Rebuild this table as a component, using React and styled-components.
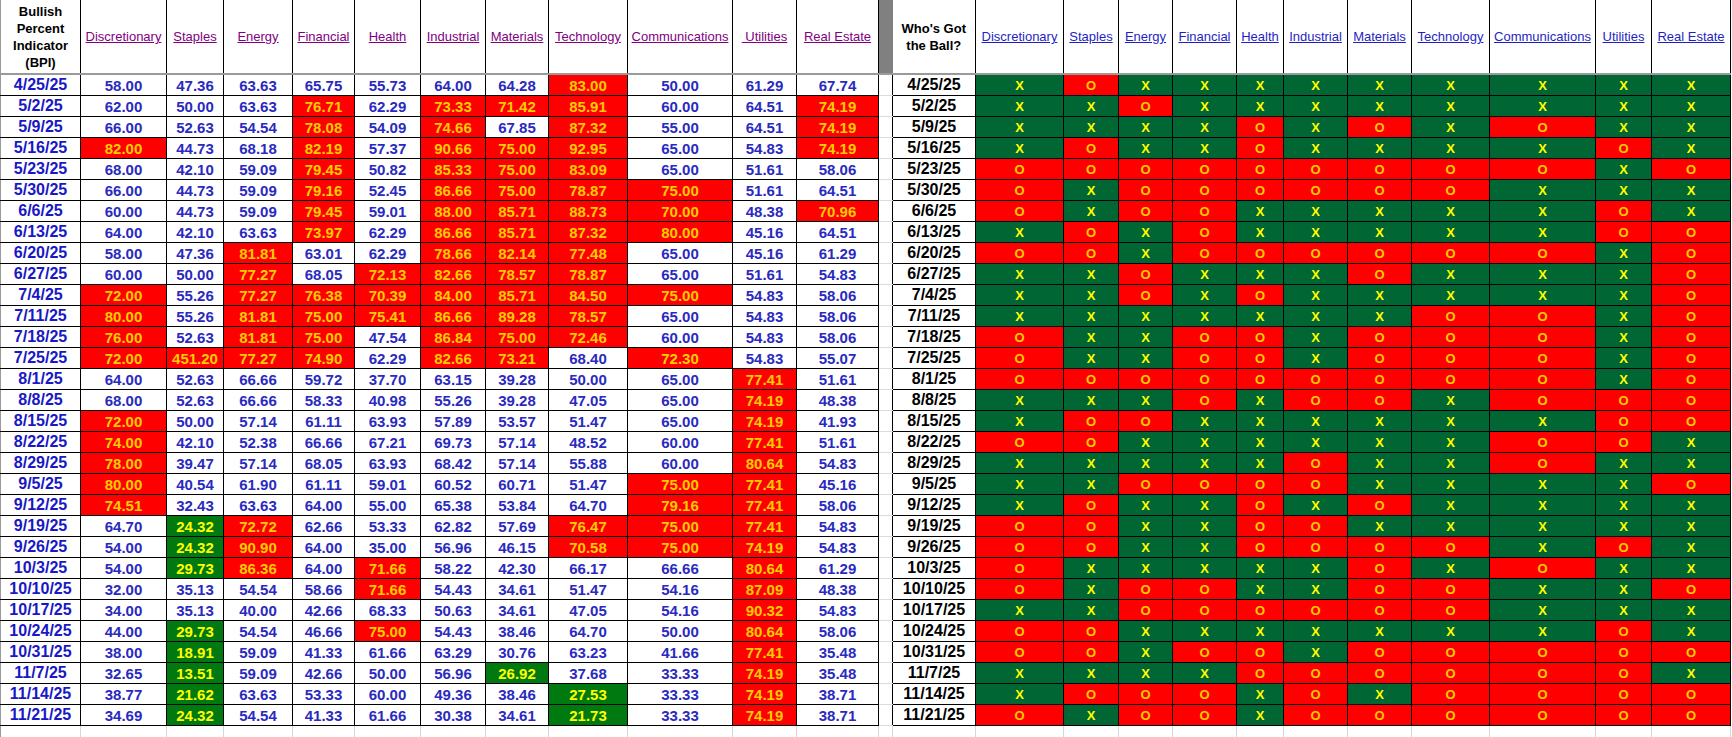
import styled, { createGlobalStyle } from 'styled-components'

const GlobalStyle = createGlobalStyle`
  html, body {
    margin: 0;
    padding: 0;
    background: #fff;
  }
  body {
    font-family: "Liberation Sans", Arial, sans-serif;
  }
`

const SECTORS = ['Discretionary', 'Staples', 'Energy', 'Financial', 'Health', 'Industrial', 'Materials', 'Technology', 'Communications', 'Utilities', 'Real Estate']

const LEFT_WIDTHS = [80, 86, 57, 69, 62, 66, 65, 63, 79, 105, 64, 82]
const GAP_WIDTH = 14
const RIGHT_WIDTHS = [83, 88, 55, 54, 64, 47, 64, 64, 78, 106, 56, 79]

// date, BPI values (r = red, g = green), who's got the ball
const ROWS = [
  ['4/25/25', '58.00 47.36 63.63 65.75 55.73 64.00 64.28 83.00r 50.00 61.29 67.74', 'XOXXXXXXXXX'],
  ['5/2/25', '62.00 50.00 63.63 76.71r 62.29 73.33r 71.42r 85.91r 60.00 64.51 74.19r', 'XXOXXXXXXXX'],
  ['5/9/25', '66.00 52.63 54.54 78.08r 54.09 74.66r 67.85 87.32r 55.00 64.51 74.19r', 'XXXXOXOXOXX'],
  ['5/16/25', '82.00r 44.73 68.18 82.19r 57.37 90.66r 75.00r 92.95r 65.00 54.83 74.19r', 'XOXXOXXXXOX'],
  ['5/23/25', '68.00 42.10 59.09 79.45r 50.82 85.33r 75.00r 83.09r 65.00 51.61 58.06', 'OOOOOOOOOXO'],
  ['5/30/25', '66.00 44.73 59.09 79.16r 52.45 86.66r 75.00r 78.87r 75.00r 51.61 64.51', 'OXOOOOOOXXX'],
  ['6/6/25', '60.00 44.73 59.09 79.45r 59.01 88.00r 85.71r 88.73r 70.00r 48.38 70.96r', 'OXOOXXXXXOX'],
  ['6/13/25', '64.00 42.10 63.63 73.97r 62.29 86.66r 85.71r 87.32r 80.00r 45.16 64.51', 'XOXOXXXXXOO'],
  ['6/20/25', '58.00 47.36 81.81r 63.01 62.29 78.66r 82.14r 77.48r 65.00 45.16 61.29', 'OOXOOOOOOXO'],
  ['6/27/25', '60.00 50.00 77.27r 68.05 72.13r 82.66r 78.57r 78.87r 65.00 51.61 54.83', 'XXOXXXOXXXO'],
  ['7/4/25', '72.00r 55.26 77.27r 76.38r 70.39r 84.00r 85.71r 84.50r 75.00r 54.83 58.06', 'XXOXOXXXXXO'],
  ['7/11/25', '80.00r 55.26 81.81r 75.00r 75.41r 86.66r 89.28r 78.57r 65.00 54.83 58.06', 'XXXXXXXOOXO'],
  ['7/18/25', '76.00r 52.63 81.81r 75.00r 47.54 86.84r 75.00r 72.46r 60.00 54.83 58.06', 'OXXOOXOOOXO'],
  ['7/25/25', '72.00r 451.20r 77.27r 74.90r 62.29 82.66r 73.21r 68.40 72.30r 54.83 55.07', 'OXXOOXOOOXO'],
  ['8/1/25', '64.00 52.63 66.66 59.72 37.70 63.15 39.28 50.00 65.00 77.41r 51.61', 'OOOOOOOOOXO'],
  ['8/8/25', '68.00 52.63 66.66 58.33 40.98 55.26 39.28 47.05 65.00 74.19r 48.38', 'XXXOXOOXOOO'],
  ['8/15/25', '72.00r 50.00 57.14 61.11 63.93 57.89 53.57 51.47 65.00 74.19r 41.93', 'XOOXXXXXXOO'],
  ['8/22/25', '74.00r 42.10 52.38 66.66 67.21 69.73 57.14 48.52 60.00 77.41r 51.61', 'OOXXXXXXOOX'],
  ['8/29/25', '78.00r 39.47 57.14 68.05 63.93 68.42 57.14 55.88 60.00 80.64r 54.83', 'XXXXXOXXOXX'],
  ['9/5/25', '80.00r 40.54 61.90 61.11 59.01 60.52 60.71 51.47 75.00r 77.41r 45.16', 'XXOOOOXXXXO'],
  ['9/12/25', '74.51r 32.43 63.63 64.00 55.00 65.38 53.84 64.70 79.16r 77.41r 58.06', 'XOXXOXOXXXX'],
  ['9/19/25', '64.70 24.32g 72.72r 62.66 53.33 62.82 57.69 76.47r 75.00r 77.41r 54.83', 'OOXXOOXXXXX'],
  ['9/26/25', '54.00 24.32g 90.90r 64.00 35.00 56.96 46.15 70.58r 75.00r 74.19r 54.83', 'OOXXOOOOXOX'],
  ['10/3/25', '54.00 29.73g 86.36r 64.00 71.66r 58.22 42.30 66.17 66.66 80.64r 61.29', 'OXXXXXOXOXX'],
  ['10/10/25', '32.00 35.13 54.54 58.66 71.66r 54.43 34.61 51.47 54.16 87.09r 48.38', 'OXOOXXOOXXO'],
  ['10/17/25', '34.00 35.13 40.00 42.66 68.33 50.63 34.61 47.05 54.16 90.32r 54.83', 'XXOOOOOOXXX'],
  ['10/24/25', '44.00 29.73g 54.54 46.66 75.00r 54.43 38.46 64.70 50.00 80.64r 58.06', 'OOXXXXXXXOX'],
  ['10/31/25', '38.00 18.91g 59.09 41.33 61.66 63.29 30.76 63.23 41.66 77.41r 35.48', 'OOXOOXOOOOO'],
  ['11/7/25', '32.65 13.51g 59.09 42.66 50.00 56.96 26.92g 37.68 33.33 74.19r 35.48', 'XXXXOOOOOOX'],
  ['11/14/25', '38.77 21.62g 63.63 53.33 60.00 49.36 38.46 27.53g 33.33 74.19r 38.71', 'XOOOXOXOOOO'],
  ['11/21/25', '34.69 24.32g 54.54 41.33 61.66 30.38 34.61 21.73g 33.33 74.19r 38.71', 'OXOOXOOOOOO'],
]

const parseValues = (line) =>
  line.split(' ').map((v) => {
    const last = v.slice(-1)
    if (last === 'r' || last === 'g') return { value: v.slice(0, -1), tone: last }
    return { value: v, tone: '' }
  })

const Sheet = styled.table`
  border-collapse: collapse;
  table-layout: fixed;
  width: 1730px;
  font-family: "Liberation Sans", Arial, sans-serif;
`

const HeadCell = styled.th`
  height: 73px;
  padding: 0 2px;
  border-right: 1px solid #000;
  border-bottom: 2px solid #9a9a9a;
  border-left: ${(p) => (p.$first ? '1px solid #9a9a9a' : 'none')};
  background: #fff;
  text-align: center;
  vertical-align: middle;
  font-size: 13px;
  font-weight: ${(p) => (p.$title ? 700 : 400)};
  line-height: 17px;
  color: #000;
  white-space: ${(p) => (p.$title ? 'normal' : 'nowrap')};
  overflow: hidden;
`

const GapHead = styled.th`
  padding: 0;
  background: #808080;
  border-bottom: 2px solid #9a9a9a;
`

const SectorLink = styled.a`
  color: ${(p) => (p.$visited ? '#800080' : '#1f1fc4')};
  text-decoration: underline;
  white-space: pre;
`

const DateCell = styled.td`
  height: 20px;
  padding: 0;
  border: 1px solid #000;
  border-left: ${(p) => (p.$first ? '1px solid #9a9a9a' : '1px solid #000')};
  text-align: center;
  vertical-align: middle;
  font-size: 16px;
  font-weight: 700;
  color: ${(p) => (p.$black ? '#000' : '#1818c4')};
  white-space: nowrap;
`

const toneBg = { r: '#ff0000', g: '#007a10', '': '#fff' }
const toneFg = { r: '#ffcc00', g: '#ffff00', '': '#2a2ac0' }

const NumCell = styled.td`
  padding: 0;
  border: 1px solid #000;
  background: ${(p) => toneBg[p.$tone]};
  color: ${(p) => toneFg[p.$tone]};
  text-align: center;
  vertical-align: middle;
  font-family: "Liberation Sans Narrow", "Arial Narrow", "Liberation Sans", sans-serif;
  font-size: 15px;
  font-weight: 700;
  white-space: nowrap;
`

const BallCell = styled.td`
  padding: 0;
  border: 1px solid #000;
  background: ${(p) => (p.$up ? '#006633' : '#ff0000')};
  color: ${(p) => (p.$up ? '#ffff00' : '#ffcc00')};
  text-align: center;
  vertical-align: middle;
  font-size: 13px;
  font-weight: 700;
`

const GapCell = styled.td`
  padding: 0;
  border-top: 1px solid #dcdcdc;
  border-bottom: 1px solid #dcdcdc;
  border-left: 1px solid #d0d0d0;
  background: #fff;
`

const FillCell = styled.td`
  height: 11px;
  padding: 0;
  border-right: 1px solid #d6d6d6;
  border-left: ${(p) => (p.$first ? '1px solid #9a9a9a' : 'none')};
`

const App = () => {
  const allWidths = [...LEFT_WIDTHS, GAP_WIDTH, ...RIGHT_WIDTHS]

  return (
    <>
      <GlobalStyle />
      <Sheet>
        <colgroup>
          {allWidths.map((w, i) => (
            <col key={i} style={{ width: w }} />
          ))}
        </colgroup>
        <thead>
          <tr>
            <HeadCell $title $first>
              Bullish Percent Indicator (BPI)
            </HeadCell>
            {SECTORS.map((s) => (
              <HeadCell key={'l' + s}>
                <SectorLink href='#' $visited>
                  {s === 'Utilities' ? ' Utilities' : s}
                </SectorLink>
              </HeadCell>
            ))}
            <GapHead />
            <HeadCell $title>
              Who's Got
              <br />
              the Ball?
            </HeadCell>
            {SECTORS.map((s) => (
              <HeadCell key={'r' + s}>
                <SectorLink href='#'>{s}</SectorLink>
              </HeadCell>
            ))}
          </tr>
        </thead>
        <tbody>
          {ROWS.map(([date, values, ball]) => (
            <tr key={date}>
              <DateCell $first>{date}</DateCell>
              {parseValues(values).map((c, i) => (
                <NumCell key={i} $tone={c.tone}>
                  {c.value}
                </NumCell>
              ))}
              <GapCell />
              <DateCell $black>{date}</DateCell>
              {ball.split('').map((b, i) => (
                <BallCell key={i} $up={b === 'X'}>
                  {b}
                </BallCell>
              ))}
            </tr>
          ))}
          <tr>
            {allWidths.map((w, i) => (
              <FillCell key={i} $first={i === 0} />
            ))}
          </tr>
        </tbody>
      </Sheet>
    </>
  )
}

export default App
